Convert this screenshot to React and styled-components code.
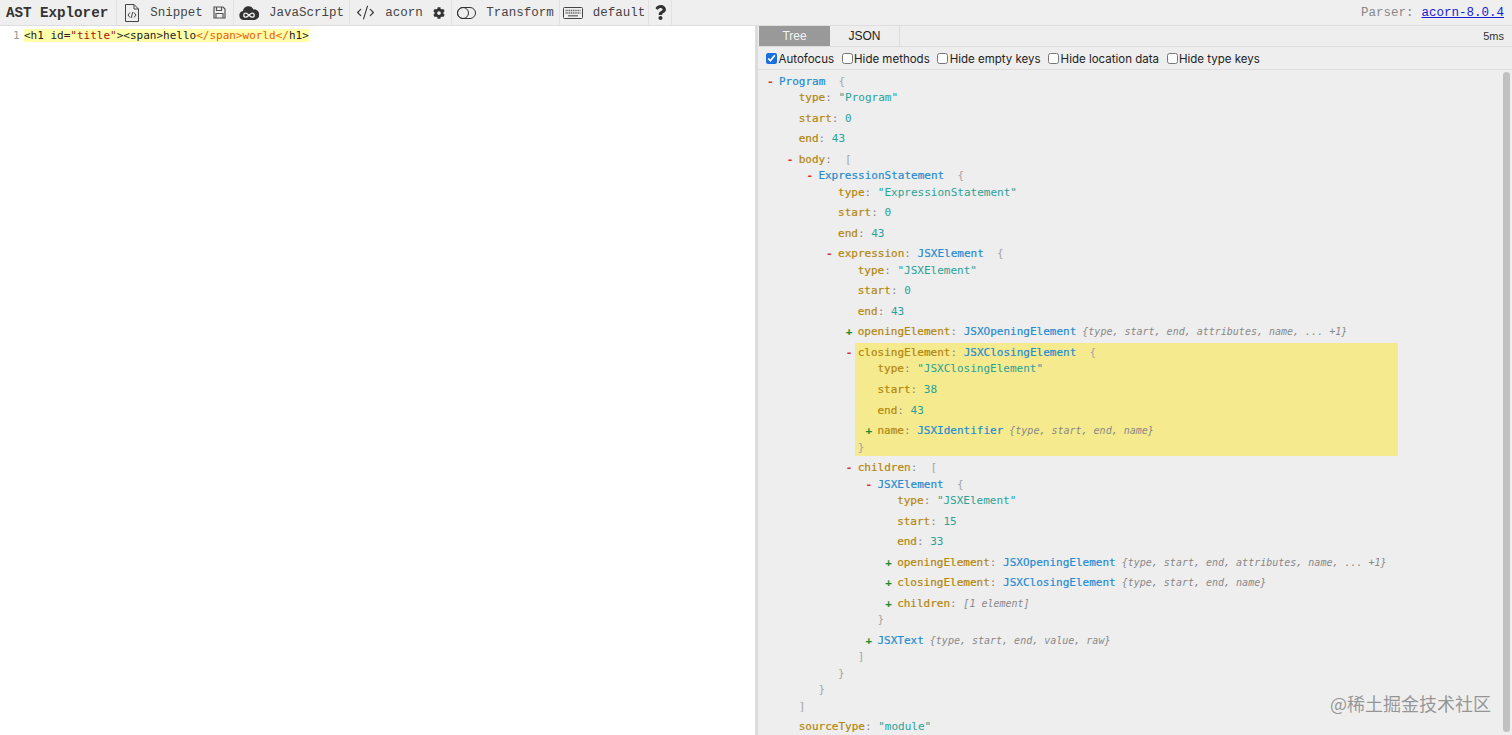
import React from 'react'
import styled, { createGlobalStyle } from 'styled-components'
import { FaCog, FaQuestion } from 'react-icons/fa'
import { CodeXml } from 'lucide-react'

const leaf = (k, v) => ({ k, v })
const closed = (k, type, summary) => ({ k, type, summary })
const open = (k, type, bracket, children) => ({ k, type, bracket, children })

const tree = open(null, 'Program', '{', [
  leaf('type', '"Program"'),
  leaf('start', '0'),
  leaf('end', '43'),
  open('body', null, '[', [
    open(null, 'ExpressionStatement', '{', [
      leaf('type', '"ExpressionStatement"'),
      leaf('start', '0'),
      leaf('end', '43'),
      open('expression', 'JSXElement', '{', [
        leaf('type', '"JSXElement"'),
        leaf('start', '0'),
        leaf('end', '43'),
        closed('openingElement', 'JSXOpeningElement', '{type, start, end, attributes, name, ... +1}'),
        {
          ...open('closingElement', 'JSXClosingElement', '{', [
            leaf('type', '"JSXClosingElement"'),
            leaf('start', '38'),
            leaf('end', '43'),
            closed('name', 'JSXIdentifier', '{type, start, end, name}'),
          ]),
          highlighted: true,
        },
        open('children', null, '[', [
          open(null, 'JSXElement', '{', [
            leaf('type', '"JSXElement"'),
            leaf('start', '15'),
            leaf('end', '33'),
            closed('openingElement', 'JSXOpeningElement', '{type, start, end, attributes, name, ... +1}'),
            closed('closingElement', 'JSXClosingElement', '{type, start, end, name}'),
            closed('children', null, '[1 element]'),
          ]),
          closed(null, 'JSXText', '{type, start, end, value, raw}'),
        ]),
      ]),
    ]),
  ]),
  leaf('sourceType', '"module"'),
])

const closers = { '{': '}', '[': ']' }

function TreeNode({ node }) {
  const expandable = node.children || node.summary
  return (
    <Entry $highlighted={node.highlighted}>
      {expandable && <Toggler $open={!!node.children}>{node.children ? '-' : '+'}</Toggler>}
      {node.k && <Key>{node.k}</Key>}
      {node.k && <Colon>: </Colon>}
      {node.v && <Value>{node.v}</Value>}
      {node.type && <TypeName>{node.type}</TypeName>}
      {node.summary && <Summary>{(node.type ? ' ' : '') + node.summary}</Summary>}
      {node.children && (
        <>
          <Bracket>{(node.type ? '  ' : ' ') + node.bracket}</Bracket>
          <ChildList>
            {node.children.map((child, i) => <TreeNode key={i} node={child} />)}
          </ChildList>
          <Bracket>{closers[node.bracket]}</Bracket>
        </>
      )}
    </Entry>
  )
}

const FileCodeIcon = () => (
  <svg width="16" height="18" viewBox="0 0 16 18" fill="none" stroke="#444" strokeWidth="1">
    <path d="M1.500 .5H10L14.500 5V17.500H1.500Z" />
    <path d="M10 .5V5H14.500" />
    <path d="M6 8.500L4 11L6 13.500M10 8.500L12 11L10 13.500M8.800 8L7.200 14" />
  </svg>
)

const SaveIcon = () => (
  <svg width="13" height="13" viewBox="0 0 13 13" fill="none" stroke="#555" strokeWidth="1.200">
    <path d="M1 1H10L12 3V12H1Z" />
    <path d="M3.500 1V4.500H8.500V1M3 12V7.500H10V12" />
  </svg>
)

const CloudIcon = () => (
  <svg width="20" height="16" viewBox="0 0 20 16">
    <path d="M5 15a4.600 4.600 0 0 1-1-9.100A5.500 5.500 0 0 1 14.400 4.400 4.500 4.500 0 0 1 15.500 15Z" fill="#333" />
    <path d="M6.800 8.200a2 2 0 1 0 0 4c2.200 0 4.200-4 6.400-4a2 2 0 1 1 0 4c-2.200 0-4.200-4-6.400-4Z" fill="none" stroke="#eee" strokeWidth="1.300" />
  </svg>
)

const ToggleIcon = () => (
  <svg width="19" height="14" viewBox="0 0 19 14" fill="none" stroke="#333" strokeWidth="1">
    <rect x=".5" y="1.500" width="18" height="11" rx="5.500" />
    <circle cx="6" cy="7" r="5.500" />
  </svg>
)

const KeyboardIcon = () => (
  <svg width="20" height="14" viewBox="0 0 20 14" fill="none">
    <rect x=".5" y="1.500" width="19" height="11" rx="1" stroke="#444" />
    <path d="M2.500 4.500H17.500M2.500 7H17.500" stroke="#666" strokeWidth="1.300" strokeDasharray="1.200 .6" />
    <path d="M5 9.800H15" stroke="#666" strokeWidth="1.300" />
  </svg>
)

function App() {
  return (
    <Page>
      <GlobalStyle />
      <Toolbar>
        <Brand>AST Explorer</Brand>
        <ToolGroup $width={117}>
          <FileCodeIcon />
          <ToolText>Snippet</ToolText>
          <SaveIcon />
        </ToolGroup>
        <ToolGroup $width={116}>
          <CloudIcon />
          <ToolText>JavaScript</ToolText>
        </ToolGroup>
        <ToolGroup $width={102}>
          <CodeXml size={19} strokeWidth={1.4} />
          <ToolText>acorn</ToolText>
          <FaCog size={12} />
        </ToolGroup>
        <ToolGroup $width={108}>
          <ToggleIcon />
          <ToolText>Transform</ToolText>
        </ToolGroup>
        <ToolGroup $width={89}>
          <KeyboardIcon />
          <ToolText>default</ToolText>
        </ToolGroup>
        <ToolGroup $width={23}>
          <FaQuestion size={15} />
        </ToolGroup>
        <ParserInfo>
          Parser: <ParserLink href="#">acorn-8.0.4</ParserLink>
        </ParserInfo>
      </Toolbar>
      <Main>
        <Editor>
          <LineNumber>1</LineNumber>
          <CodeLine>
            {'<h1 id='}<CodeString>"title"</CodeString>{'><span>hello'}
            <CodeMatch>{'</span>world</'}</CodeMatch>{'h1>'}
          </CodeLine>
        </Editor>
        <Output>
          <Tabs>
            <Tab $active>Tree</Tab>
            <Tab>JSON</Tab>
            <Timing>5ms</Timing>
          </Tabs>
          <Options>
            {['Autofocus', 'Hide methods', 'Hide empty keys', 'Hide location data', 'Hide type keys'].map((label, i) => (
              <Option key={label}>
                <input type="checkbox" defaultChecked={i === 0} />
                {label}
              </Option>
            ))}
          </Options>
          <TreeView>
            <RootList>
              <TreeNode node={tree} />
            </RootList>
            <Scrollbar />
          </TreeView>
          <Watermark>@稀土掘金技术社区</Watermark>
        </Output>
      </Main>
    </Page>
  )
}

const GlobalStyle = createGlobalStyle`
  html, body {
    margin: 0;
    height: 100%;
    overflow: hidden;
  }
`

const Page = styled.div`
  display: flex;
  flex-direction: column;
  height: 100vh;
  background: #fff;
`

const Toolbar = styled.div`
  display: flex;
  align-items: stretch;
  flex: none;
  height: 25px;
  background: #efefef;
  border-bottom: 1px solid #dddddd;
  font-family: "Liberation Mono", monospace;
  font-size: 12.500px;
  color: #454545;
`

const Brand = styled.div`
  display: flex;
  align-items: center;
  width: 117px;
  box-sizing: border-box;
  padding-left: 6px;
  font-size: 14.200px;
  font-weight: bold;
  color: #333;
  border-right: 1px solid #e2e2e2;
`

const ToolGroup = styled.div`
  display: flex;
  align-items: center;
  justify-content: center;
  gap: 10px;
  width: ${p => p.$width}px;
  box-sizing: border-box;
  border-right: 1px solid #e2e2e2;
  color: #333;
`

const ToolText = styled.span`
  color: #454545;
`

const ParserInfo = styled.div`
  margin-left: auto;
  padding-right: 8px;
  display: flex;
  align-items: center;
  gap: 8px;
  color: #888;
`

const ParserLink = styled.a`
  color: #1a1ad6;
`

const Main = styled.div`
  display: flex;
  flex: 1;
  min-height: 0;
`

const Editor = styled.div`
  display: flex;
  width: 755px;
  flex: none;
  padding-top: 3px;
  box-sizing: border-box;
  font-family: "DejaVu Sans Mono", monospace;
  font-size: 11px;
  line-height: 13px;
`

const LineNumber = styled.div`
  width: 24px;
  flex: none;
  box-sizing: border-box;
  padding-left: 13px;
  color: #999;
`

const CodeLine = styled.div`
  height: 13px;
  background: #ffffaa;
  color: #222;
  white-space: pre;
`

const CodeString = styled.span`
  color: #aa1111;
`

const CodeMatch = styled.span`
  color: #f05a00;
`

const Output = styled.div`
  position: relative;
  display: flex;
  flex-direction: column;
  flex: 1;
  min-width: 0;
  background: #eeeeee;
  border-left: 3px solid #dcdcdc;
  overflow: hidden;
`

const Tabs = styled.div`
  display: flex;
  align-items: stretch;
  flex: none;
  height: 20px;
  padding-left: 1px;
  border-bottom: 1px solid #dddddd;
  font-family: "Liberation Sans", Arial, sans-serif;
  font-size: 12px;
`

const Tab = styled.div`
  display: flex;
  align-items: center;
  justify-content: center;
  width: ${p => (p.$active ? 71 : 69)}px;
  background: ${p => (p.$active ? '#999999' : 'transparent')};
  color: ${p => (p.$active ? '#f4f4f4' : '#222')};
  border-right: ${p => (p.$active ? 'none' : '1px solid #dddddd')};
`

const Timing = styled.div`
  margin-left: auto;
  padding-right: 8px;
  display: flex;
  align-items: center;
  font-size: 11px;
  color: #333;
`

const Options = styled.div`
  display: flex;
  align-items: center;
  flex: none;
  gap: 7.500px;
  height: 23px;
  box-sizing: border-box;
  padding: 1px 0 0 8px;
  border-bottom: 1px solid #dddddd;
  font-family: "Inter", "Liberation Sans", sans-serif;
  font-size: 11.500px;
  color: #222;
`

const Option = styled.label`
  display: flex;
  align-items: center;
  gap: 1.500px;

  input {
    width: 11px;
    height: 11px;
    margin: 0;
    accent-color: #1a6fe0;
  }
`

const TreeView = styled.div`
  position: relative;
  flex: 1;
  min-height: 0;
  overflow: hidden;
  padding: 3.500px 0 0 21px;
  font-family: "DejaVu Sans Mono", monospace;
  font-size: 11px;
  line-height: 16.500px;
  white-space: pre;
`

const Scrollbar = styled.div`
  position: absolute;
  top: 2px;
  right: 2px;
  width: 7px;
  height: 660px;
  border-radius: 4px;
  background: #c0c0c0;
`

const RootList = styled.ul`
  list-style: none;
  margin: 0;
  padding: 0;
`

const ChildList = styled.ul`
  list-style: none;
  margin: 0;
  padding: 0 0 0 19.700px;
`

const Entry = styled.li`
  position: relative;

  & + & {
    margin-top: 4.050px;
  }

  ${p => p.$highlighted && `
    background: #f5ea8e;
    box-shadow: 0 -2px 0 #f5ea8e;
    width: 543px;
    margin-left: -3px;
    padding-left: 3px;
    box-sizing: border-box;
    & > span:first-child { left: -9px; }
  `}
`

const Toggler = styled.span`
  position: absolute;
  left: -12px;
  font-weight: bold;
  color: ${p => (p.$open ? '#d1372e' : '#1f8a2f')};
`

const Key = styled.span`
  color: #b3860c;
  -webkit-text-stroke: 0.2px #b3860c;
`

const Colon = styled.span`
  color: #888;
`

const Value = styled.span`
  color: #2aa198;
`

const TypeName = styled.span`
  color: #268bd2;
  -webkit-text-stroke: 0.2px #268bd2;
`

const Bracket = styled.span`
  color: #a5a5a5;
`

const Summary = styled.span`
  color: #888;
  font-style: italic;
  font-size: 10px;
`

const Watermark = styled.div`
  position: absolute;
  right: 21px;
  bottom: 20px;
  font-family: "Noto Sans CJK SC", sans-serif;
  font-size: 18px;
  line-height: 24px;
  color: rgba(120, 120, 120, 0.75);
  pointer-events: none;
`

export default App
